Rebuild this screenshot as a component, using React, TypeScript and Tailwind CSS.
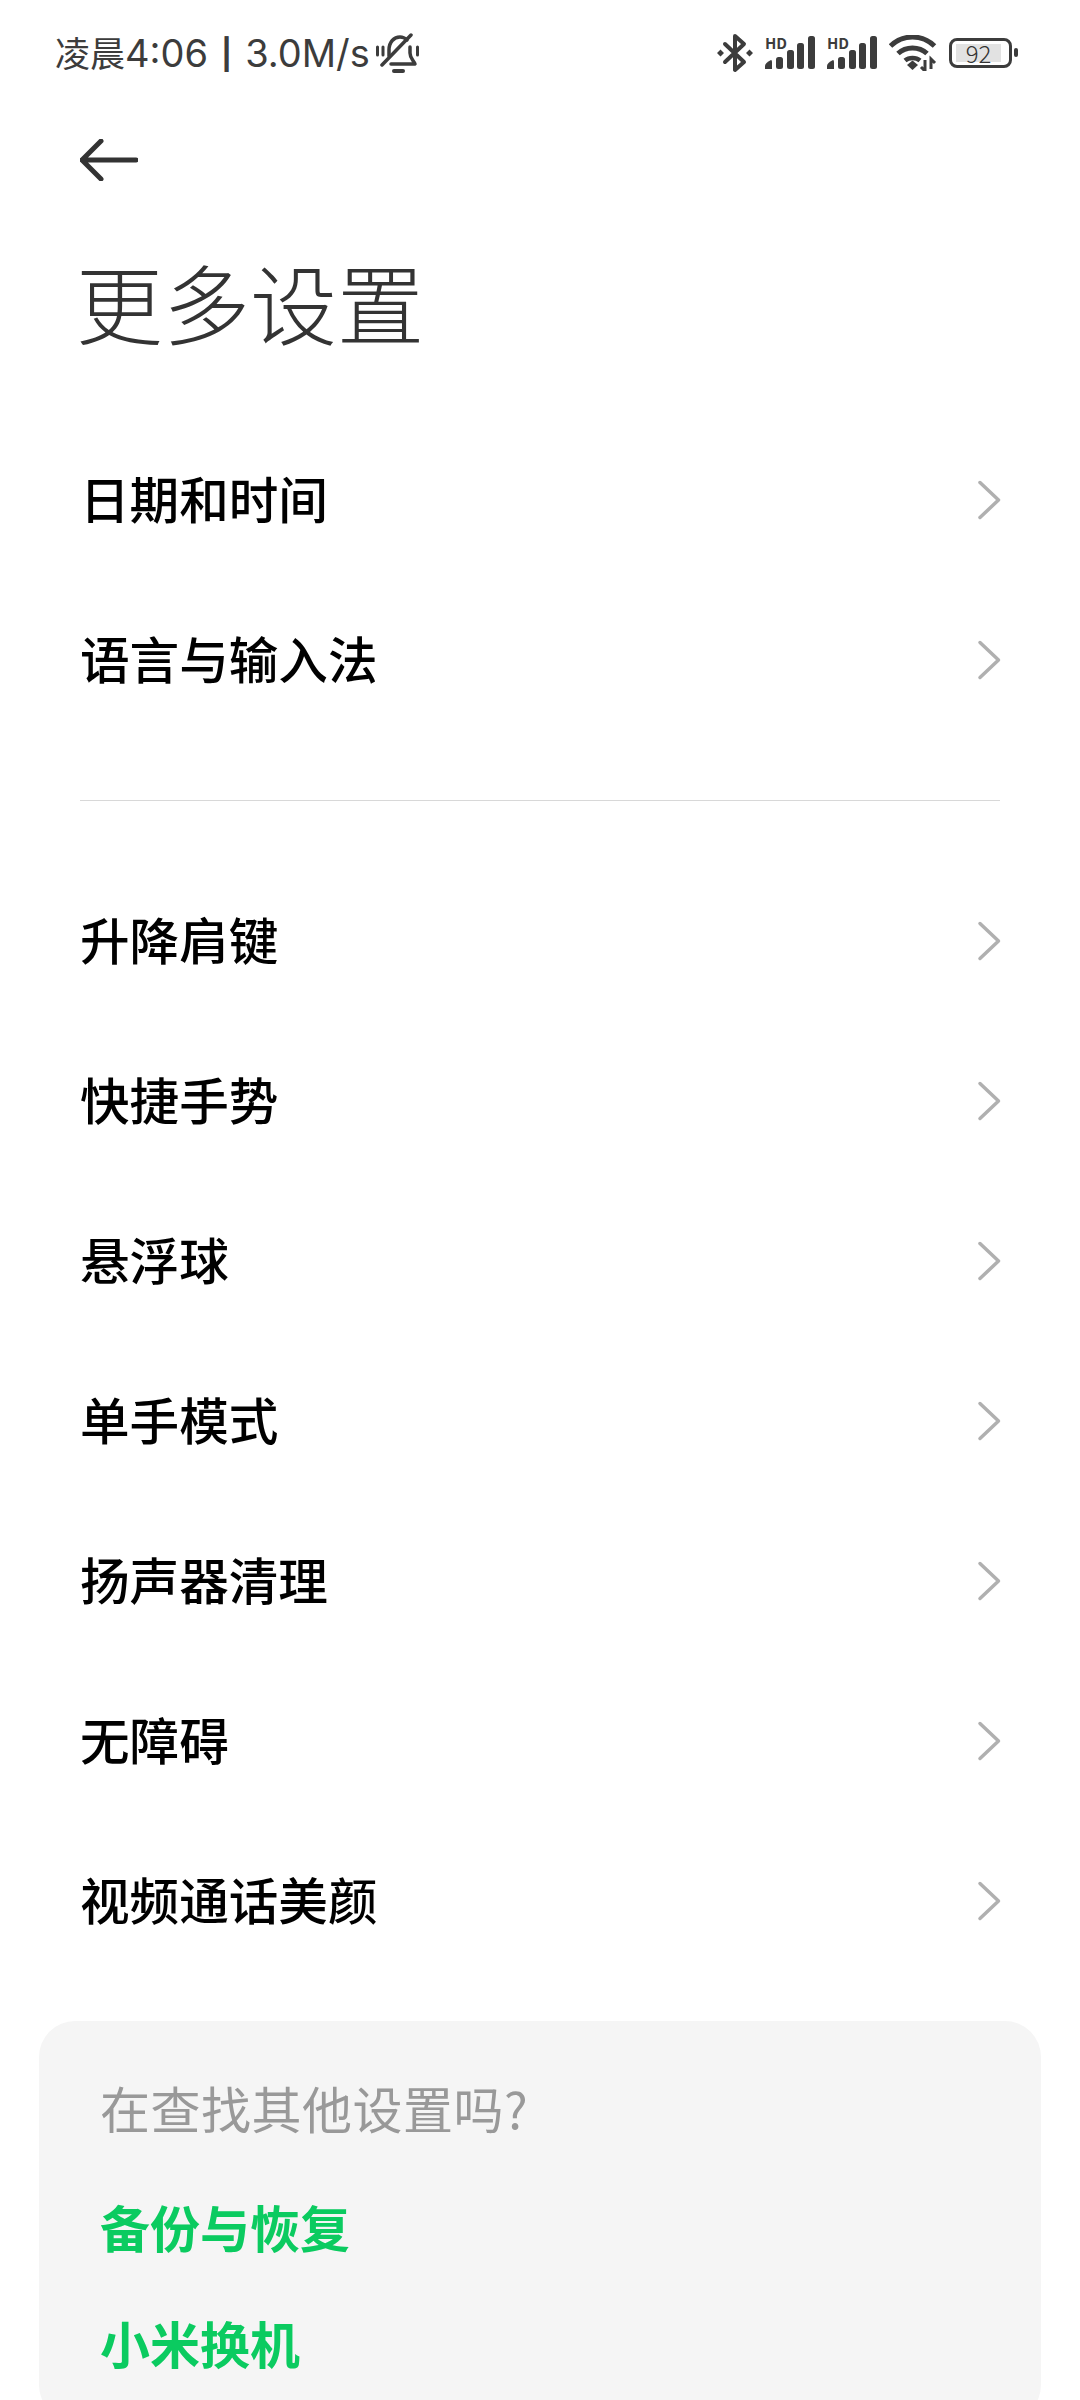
const FONT = "font-['Noto_Sans_CJK_SC','Noto_Sans',sans-serif]";

function Chevron() {
  return (
    <svg width="26" height="40" viewBox="0 0 26 40" fill="none" className="shrink-0">
      <path d="M3 2.5 L21.5 20 L3 37.5" stroke="#b0b0b0" strokeWidth="3.5" strokeLinecap="round" strokeLinejoin="round" />
    </svg>
  );
}

function Row({ label }: { label: string }) {
  return (
    <div className="h-[160px] flex items-center justify-between pl-[80px] pr-[77px]">
      <span className="text-[49.6px] font-medium leading-none text-black -translate-y-[2px]">{label}</span>
      <Chevron />
    </div>
  );
}

function Bell() {
  return (
    <svg width="44" height="40" viewBox="0 0 44 40" fill="none" stroke="#3c3c3c" strokeLinecap="round" strokeLinejoin="round">
      <path d="M13 23 V17 C13 9 18 4 24 4 C27 4 29 5 31 7" strokeWidth="3.5" />
      <path d="M34 14 V20 C34 25 37 27 39 31 H15" strokeWidth="3.5" />
      <path d="M6 32 L35 2" strokeWidth="3.5" />
      <path d="M1.5 14 V22 M7 14 V22 M41.5 14 V22" strokeWidth="3" />
      <path d="M18 38 H27" strokeWidth="4" />
    </svg>
  );
}

function Bluetooth() {
  return (
    <svg width="36" height="40" viewBox="0 0 36 40" fill="none">
      <path d="M8 11 L27 29 L18 37 V3 L27 11 L8 29" stroke="#3c3c3c" strokeWidth="4" strokeLinejoin="round" strokeLinecap="round" />
      <path d="M3.5 16.5 L7 20 L3.5 23.5 L0 20 Z M32.5 16.5 L36 20 L32.5 23.5 L29 20 Z" fill="#3c3c3c" />
    </svg>
  );
}

function Signal() {
  return (
    <div className="relative w-[50px] h-[34px]">
      <span className={`absolute left-0 top-[-1px] text-[15px] font-bold leading-none text-[#3c3c3c] ${FONT}`}>HD</span>
      <svg width="50" height="34" viewBox="0 0 50 34" className="absolute inset-0">
        <path d="M0 33 V30 Q0 27 6 24 Q7 24 7 26 V33 Z" fill="#3c3c3c" />
        <rect x="11" y="21" width="7" height="12" rx="2.5" fill="#3c3c3c" />
        <rect x="22" y="14" width="7" height="19" rx="2.5" fill="#3c3c3c" />
        <rect x="32" y="7" width="7" height="26" rx="2.5" fill="#3c3c3c" />
        <rect x="43" y="0" width="7" height="33" rx="2.5" fill="#3c3c3c" />
      </svg>
    </div>
  );
}

function Wifi() {
  return (
    <svg width="48" height="36" viewBox="0 0 48 36" fill="none" stroke="#3c3c3c" strokeLinecap="butt">
      <path d="M1.5 11 C14 -1 33 -1 45.5 11" strokeWidth="5" />
      <path d="M9 18.5 C17 11 30 11 38 18.5" strokeWidth="5" />
      <path d="M16 25.5 C20 22 27 22 31 25.5" strokeWidth="4.5" />
      <path d="M18 30 L23.5 25.5 L29 30 L23.5 35 Z" fill="#3c3c3c" stroke="none" />
      <path d="M36 25 V36 L32 32 M42 34 V24 L46 28" strokeWidth="3" />
    </svg>
  );
}

function Battery() {
  return (
    <div className="flex items-center gap-[2px]">
      <div className="w-[63px] h-[30px] border-[3px] border-[#3c3c3c] rounded-[8px] flex items-center pl-[4px]">
        <div className="w-[45px] h-[18px] bg-[#e2e2e2] flex items-center justify-center">
          <span className={`text-[24px] leading-none text-[#333] font-light ${FONT}`}>92</span>
        </div>
      </div>
      <div className="w-[4px] h-[9px] rounded-full bg-[#3c3c3c]" />
    </div>
  );
}

function StatusBar() {
  return (
    <div className="h-[105px] flex items-center justify-between pl-[55px] pr-[62px]">
      <div className="flex items-center gap-[6px]">
        <span className="text-[38px] leading-none text-[#3c3c3c] whitespace-nowrap font-['Inter','Noto_Sans_CJK_SC',sans-serif]">
          <span className="text-[35px]">凌晨</span>4:06<span className="text-[30px] font-bold mx-[13px] relative -top-[2px]">|</span>3.0M/s
        </span>
        <Bell />
      </div>
      <div className="flex items-center gap-[12px]">
        <Bluetooth />
        <Signal />
        <Signal />
        <Wifi />
        <Battery />
      </div>
    </div>
  );
}

export default function App() {
  const first = ["日期和时间", "语言与输入法"];
  const second = ["升降肩键", "快捷手势", "悬浮球", "单手模式", "扬声器清理", "无障碍", "视频通话美颜"];
  return (
    <div className={`w-[1080px] h-[2400px] bg-white overflow-hidden ${FONT}`}>
      <StatusBar />
      <div className="h-[110px] flex items-center pl-[80px]">
        <svg width="58" height="42" viewBox="0 0 58 42" fill="none" stroke="#333" strokeWidth="5" strokeLinecap="round" strokeLinejoin="round">
          <path d="M21 2 L2 21 L21 40 M2 21 H56" />
        </svg>
      </div>
      <div className="h-[205px] pl-[76px] pt-[43px]">
        <h1 className="text-[87px] font-light leading-none text-[#333]">更多设置</h1>
      </div>
      {first.map((l) => <Row key={l} label={l} />)}
      <div className="h-[1px] bg-[#d8d8d8] mx-[80px] mt-[60px] mb-[60px]" />
      {second.map((l) => <Row key={l} label={l} />)}
      <div className="mx-[39px] mt-[40px] h-[400px] rounded-[36px] bg-[#f5f5f5] pl-[61px] pt-[61px]">
        <p className="text-[50px] tracking-[0.5px] leading-none text-[#999]">在查找其他设置吗?</p>
        <p className="mt-[69px] text-[50px] font-bold leading-none text-[#0bcb60]">备份与恢复</p>
        <p className="mt-[66px] text-[50px] font-bold leading-none text-[#0bcb60]">小米换机</p>
      </div>
    </div>
  );
}
